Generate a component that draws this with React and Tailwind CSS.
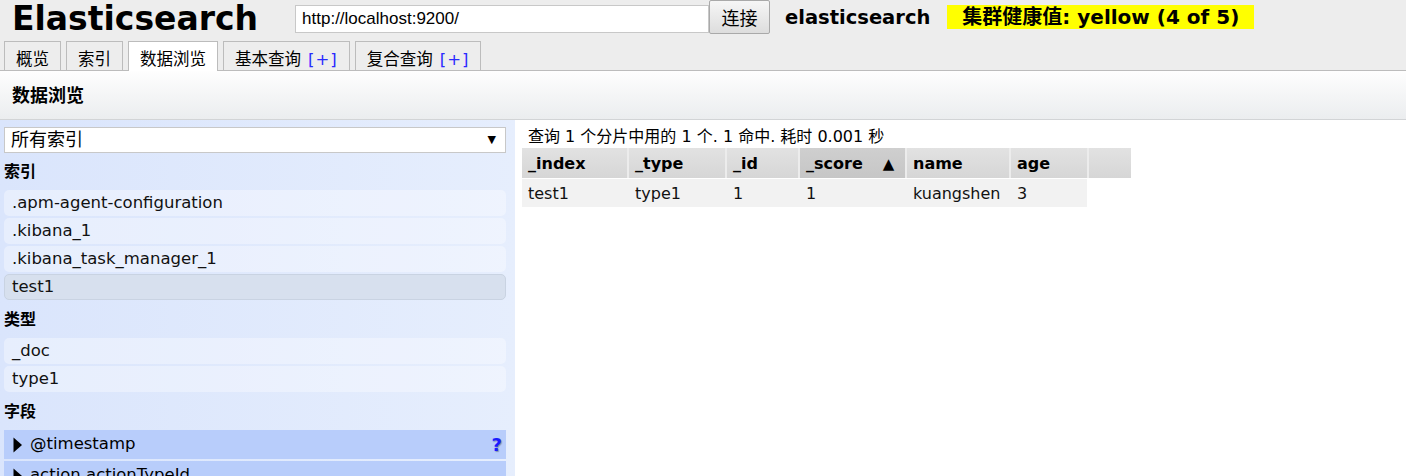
import { useState } from 'react'

const FONT = "font-['DejaVu_Sans','Noto_Sans_CJK_SC',sans-serif]"

const TABS = [
  { label: '概览' },
  { label: '索引' },
  { label: '数据浏览', active: true },
  { label: '基本查询', plus: true },
  { label: '复合查询', plus: true },
]

const INDICES = ['.apm-agent-configuration', '.kibana_1', '.kibana_task_manager_1', 'test1']
const TYPES = ['_doc', 'type1']
const FIELDS = ['@timestamp', 'action.actionTypeId']

const COLUMNS = [
  { key: '_index', w: 'w-[107px]', rw: 'w-[107px]' },
  { key: '_type', w: 'w-[98px]', rw: 'w-[98px]' },
  { key: '_id', w: 'w-[73px]', rw: 'w-[73px]' },
  { key: '_score', w: 'w-[107px]', rw: 'w-[107px]', sorted: true },
  { key: 'name', w: 'w-[104px]', rw: 'w-[104px]' },
  { key: 'age', w: 'w-[78px]', rw: 'w-[76px]' },
]

const ROW = { _index: 'test1', _type: 'type1', _id: '1', _score: '1', name: 'kuangshen', age: '3' }

// margins collapse with the item's mb-[2px]
function SectionTitle({ children, first }) {
  return (
    <div className={`${first ? 'mt-[9px]' : 'mt-[10px]'} mb-2 leading-5 text-[16px] font-bold text-black`}>
      {children}
    </div>
  )
}

function ListItem({ label, selected }) {
  return (
    <div
      className={`mb-[2px] h-[26px] rounded-[5px] text-[16.5px] text-[#111] ${
        selected ? 'bg-[#d7e0ee] border border-[#c9d3e2] leading-[24px] pl-[7px]' : 'bg-white/35 pl-2 leading-[26px]'
      }`}
    >
      {label}
    </div>
  )
}

export default function App() {
  const [selIndex] = useState('test1')

  return (
    <div className={`${FONT} h-[476px] w-full overflow-hidden bg-white text-black`}>
      {/* top header */}
      <div className="bg-[#ededed]">
        <div className="flex h-[41px] items-start">
          <div className="ml-3 mt-[1px] text-[33px] font-bold leading-[36px]">Elasticsearch</div>
          <div className="ml-[37px] mt-[5px] flex h-[28px] w-[414px] items-center border border-[#c8c8c8] bg-white pl-[6px] font-['Liberation_Sans',sans-serif] text-[17px]">
            http://localhost:9200/
          </div>
          <button className="h-[34px] w-[61px] rounded-[2px] border border-[#a9a9a9] bg-linear-to-b from-[#f6f6f6] to-[#dddddd] text-[18px] font-['Noto_Sans_CJK_SC',sans-serif] leading-none">
            连接
          </button>
          <div className="ml-[15px] mt-[5px] text-[19.5px] font-bold leading-[26px]">elasticsearch</div>
          <div className="ml-[17px] mt-[5px] h-[24px] bg-[#ffff00] px-[15px] text-[20px] font-bold leading-[24px]">
            集群健康值: yellow (4 of 5)
          </div>
        </div>
        <div className="flex h-[30px] items-end gap-[5px] border-b border-[#bcbcbc] pl-1">
          {TABS.map(t => (
            <div
              key={t.label}
              className={`relative h-[29px] border border-b-0 border-[#bcbcbc] px-[11px] pt-[8px] text-[16.5px] leading-[20px] ${
                t.active ? 'bg-white -mb-px h-[30px]' : 'bg-[#ededed]'
              }`}
            >
              {t.label}
              {t.plus && <span className="ml-[7px] tracking-[1px] text-[#2a2aff]">[+]</span>}
            </div>
          ))}
        </div>
      </div>

      {/* page title */}
      <div className="flex h-[49px] items-center border-b border-[#d2d4d6] bg-linear-to-b from-[#fefefe] to-[#ebedef] pl-3">
        <span className="text-[18px] font-bold">数据浏览</span>
      </div>

      <div className="flex">
        {/* sidebar */}
        <div className="h-[360px] w-[515px] shrink-0 bg-linear-to-r from-[#dae5fc] to-[#e6eefd] pl-1 pr-[9px] pt-[7px]">
          <div className="relative flex h-[26px] items-center border border-[#c8c8c8] bg-white pl-[6px] text-[18px] leading-none">
            所有索引
            <span className="absolute right-[9px] top-[6px] text-[11px]">▼</span>
          </div>

          <SectionTitle first>索引</SectionTitle>
          {INDICES.map(i => (
            <ListItem key={i} label={i} selected={i === selIndex} />
          ))}

          <SectionTitle>类型</SectionTitle>
          {TYPES.map(t => (
            <ListItem key={t} label={t} />
          ))}

          <SectionTitle>字段</SectionTitle>
          {FIELDS.map(f => (
            <div key={f} className="mb-[2px] flex h-[29px] items-center bg-[#b8cdfb] pl-2 text-[16.5px]">
              <svg width="11" height="16" viewBox="0 0 11 16" className="mr-[7px] shrink-0">
                <path d="M1.5 0.5 L10 8 L1.5 15.5 Z" fill="#000" />
              </svg>
              <span className="flex-1">{f}</span>
              {f === '@timestamp' && (
                <span className="mr-[4px] text-[18px] font-bold text-[#1a1aff] [text-shadow:1px_1px_1px_#8090b0]">?</span>
              )}
            </div>
          ))}
        </div>

        {/* results */}
        <div className="flex-1 pl-[7px] pt-[5px]">
          <div className="pl-[6px] text-[16px] leading-[23px]">查询 1 个分片中用的 1 个. 1 命中. 耗时 0.001 秒</div>
          <div className="flex">
            {COLUMNS.map(c => (
              <div
                key={c.key}
                className={`${c.w} h-[30px] border-r-2 border-[#ececec] pl-[6px] pt-[2px] text-[16px] font-bold leading-[28px] ${
                  c.sorted ? 'bg-linear-to-b from-[#cfcfcf] to-[#c6c6c6]' : 'bg-linear-to-b from-[#e2e2e2] to-[#d6d6d6]'
                }`}
              >
                {c.key}
                {c.sorted && <span className="ml-[20px] text-[15px]">▲</span>}
              </div>
            ))}
            <div className="h-[30px] w-[42px] bg-linear-to-b from-[#e2e2e2] to-[#d6d6d6]" />
          </div>
          <div className="mt-[1px] flex w-fit bg-[#f2f2f2]">
            {COLUMNS.map(c => (
              <div key={c.key} className={`${c.rw} h-[28px] pl-[6px] pt-[1px] text-[16px] leading-[27px] text-[#111]`}>
                {ROW[c.key]}
              </div>
            ))}
          </div>
        </div>
      </div>
    </div>
  )
}
